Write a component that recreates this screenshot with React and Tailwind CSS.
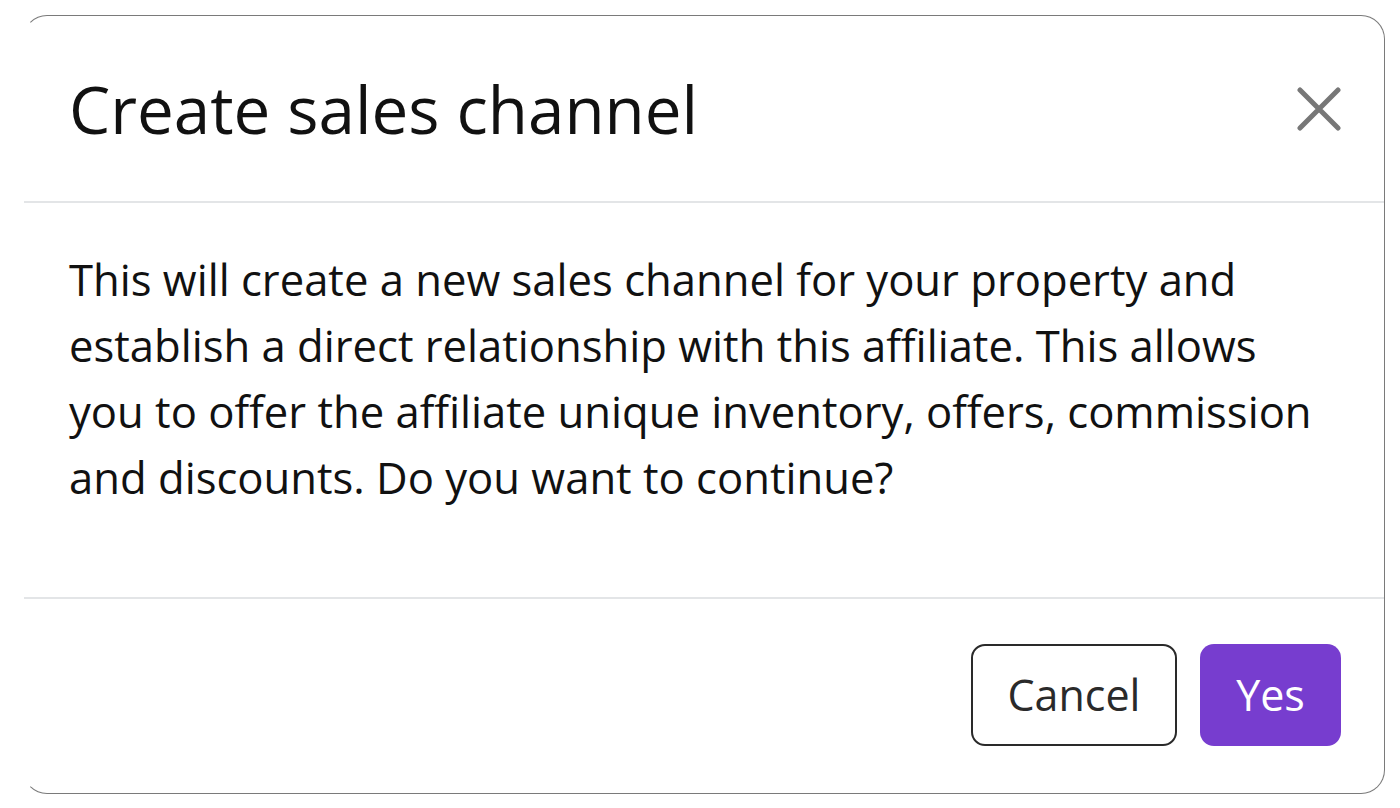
export default function App() {
  return (
    <div
      className="w-[1400px] h-[808px] bg-white pt-[15px] pl-[23px] overflow-hidden"
      style={{ fontFamily: "'Open Sans', 'Liberation Sans', sans-serif" }}
    >
      <div className="w-[1362px] h-[779px] bg-white rounded-[24px] border border-[#7a7a7a] border-l-transparent flex flex-col overflow-hidden">
        {/* header */}
        <div className="h-[187px] flex items-center justify-between pl-[45px] pr-[43px] border-b-2 border-[#e3e5e7]">
          <h1 className="text-[65.5px] leading-none text-[#111] font-normal">Create sales channel</h1>
          <button className="w-[44px] h-[44px] flex items-center justify-center">
            <svg width="44" height="44" viewBox="0 0 44 44" fill="none">
              <path d="M3 3 L41 41 M41 3 L3 41" stroke="#777" strokeWidth="5" strokeLinecap="round" />
            </svg>
          </button>
        </div>

        {/* body */}
        <div className="h-[396px] pl-[45px] pr-[55px] pt-[43px] border-b-2 border-[#e3e5e7]">
          <p className="text-[43.6px] leading-[66px] text-[#111]">
            This will create a new sales channel for your property and establish a direct relationship
            with this affiliate. This allows you to offer the affiliate unique inventory, offers,
            commission and discounts. Do you want to continue?
          </p>
        </div>

        {/* footer */}
        <div className="flex-1 flex items-start justify-end gap-[23px] pt-[45px] pr-[43px]">
          <button className="w-[206px] h-[102px] rounded-[14px] border-2 border-[#2a2a2a] text-[43px] text-[#2a2a2a] bg-white">
            Cancel
          </button>
          <button className="w-[141px] h-[102px] rounded-[14px] bg-[#773dcf] text-[43px] text-white">
            Yes
          </button>
        </div>
      </div>
    </div>
  );
}
